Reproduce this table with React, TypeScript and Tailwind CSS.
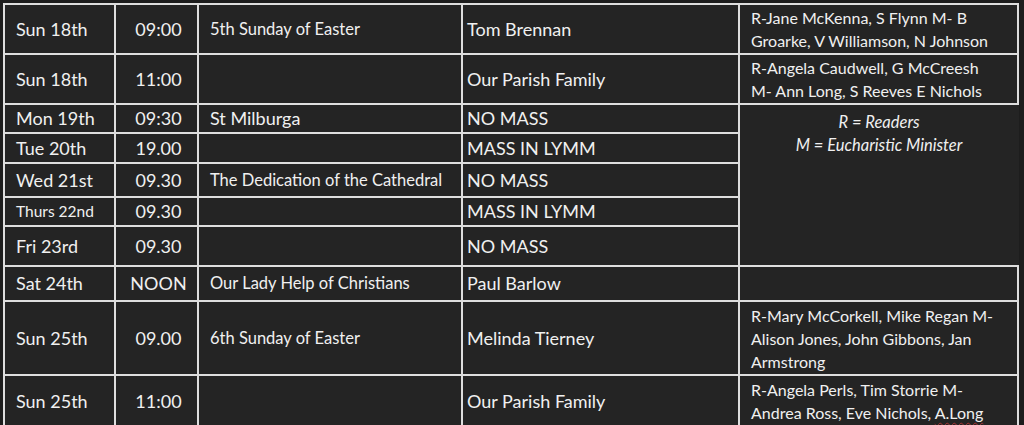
import React from 'react';

type Row = {
  day: string;
  time: string;
  feast?: string;
  intention: string;
  h: number;
  dayCls?: string;
  feastCls?: string;
  ministers?: React.ReactNode;
  merged?: boolean;
  skipLast?: boolean;
};

const rows: Row[] = [
  {
    day: 'Sun 18th',
    time: '09:00',
    feast: '5th Sunday of Easter',
    intention: 'Tom Brennan',
    h: 50,
    ministers: (
      <>
        R-Jane McKenna, S Flynn M- B
        <br />
        Groarke, V Williamson, N Johnson
      </>
    ),
  },
  {
    day: 'Sun 18th',
    time: '11:00',
    intention: 'Our Parish Family',
    h: 50,
    ministers: (
      <>
        R-Angela Caudwell, G McCreesh
        <br />
        M- Ann Long, S Reeves E Nichols
      </>
    ),
  },
  { day: 'Mon 19th', time: '09:30', feast: 'St Milburga', feastCls: 'text-[18px]', intention: 'NO MASS', h: 29, merged: true },
  { day: 'Tue 20th', time: '19.00', intention: 'MASS IN LYMM', h: 30, skipLast: true },
  { day: 'Wed 21st', time: '09.30', feast: 'The Dedication of the Cathedral', intention: 'NO MASS', h: 34, skipLast: true },
  { day: 'Thurs 22nd', time: '09.30', dayCls: 'text-[15.5px]', intention: 'MASS IN LYMM', h: 29, skipLast: true },
  { day: 'Fri 23rd', time: '09.30', intention: 'NO MASS', h: 40, skipLast: true },
  { day: 'Sat 24th', time: 'NOON', feast: 'Our Lady Help of Christians', intention: 'Paul Barlow', h: 35, ministers: '' },
  {
    day: 'Sun 25th',
    time: '09.00',
    feast: '6th Sunday of Easter',
    intention: 'Melinda Tierney',
    h: 74,
    ministers: (
      <>
        R-Mary McCorkell, Mike Regan M-
        <br />
        Alison Jones, John Gibbons, Jan
        <br />
        Armstrong
      </>
    ),
  },
  {
    day: 'Sun 25th',
    time: '11:00',
    intention: 'Our Parish Family',
    h: 52,
    ministers: (
      <>
        R-Angela Perls, Tim Storrie M-
        <br />
        Andrea Ross, Eve Nichols,{' '}
        <span className="underline decoration-wavy decoration-[#a33] decoration-1 underline-offset-[3px]">A.Long</span>
      </>
    ),
  },
];

const cell = 'border-2 border-[#dedede] align-middle p-0';

export default function App() {
  return (
    <div className="w-[1024px] h-[425px] overflow-hidden bg-[#1d1d1d] pl-[3px] pt-[3px] text-[#f0f0f0] font-['Lato','Open_Sans',sans-serif]">
      <table className="border-collapse table-fixed w-[1014px] bg-[#242424]">
        <colgroup>
          <col className="w-[111px]" />
          <col className="w-[83px]" />
          <col className="w-[264px]" />
          <col className="w-[277px]" />
          <col className="w-[279px]" />
        </colgroup>
        <tbody>
          {rows.map((r, i) => (
            <tr key={i} style={{ height: r.h }}>
              <td className={`${cell} pl-[11px] ${r.dayCls ?? 'text-[18px]'}`}>{r.day}</td>
              <td className={`${cell} text-center pl-[4px] text-[18px]`}>{r.time}</td>
              <td className={`${cell} pl-[11px] ${r.feastCls ?? 'text-[16.5px]'}`}>{r.feast}</td>
              <td className={`${cell} pl-[4px] text-[18px]`}>{r.intention}</td>
              {r.merged ? (
                <td rowSpan={5} className={`${cell} border-r-0 align-top text-center pt-[6px] text-[16.5px] leading-[23px] italic`}>
                  R = Readers
                  <br />
                  M = Eucharistic Minister
                </td>
              ) : r.skipLast ? null : (
                <td className={`${cell} pl-[11px] text-[16px] leading-[23px]`}>{r.ministers}</td>
              )}
            </tr>
          ))}
        </tbody>
      </table>
    </div>
  );
}
